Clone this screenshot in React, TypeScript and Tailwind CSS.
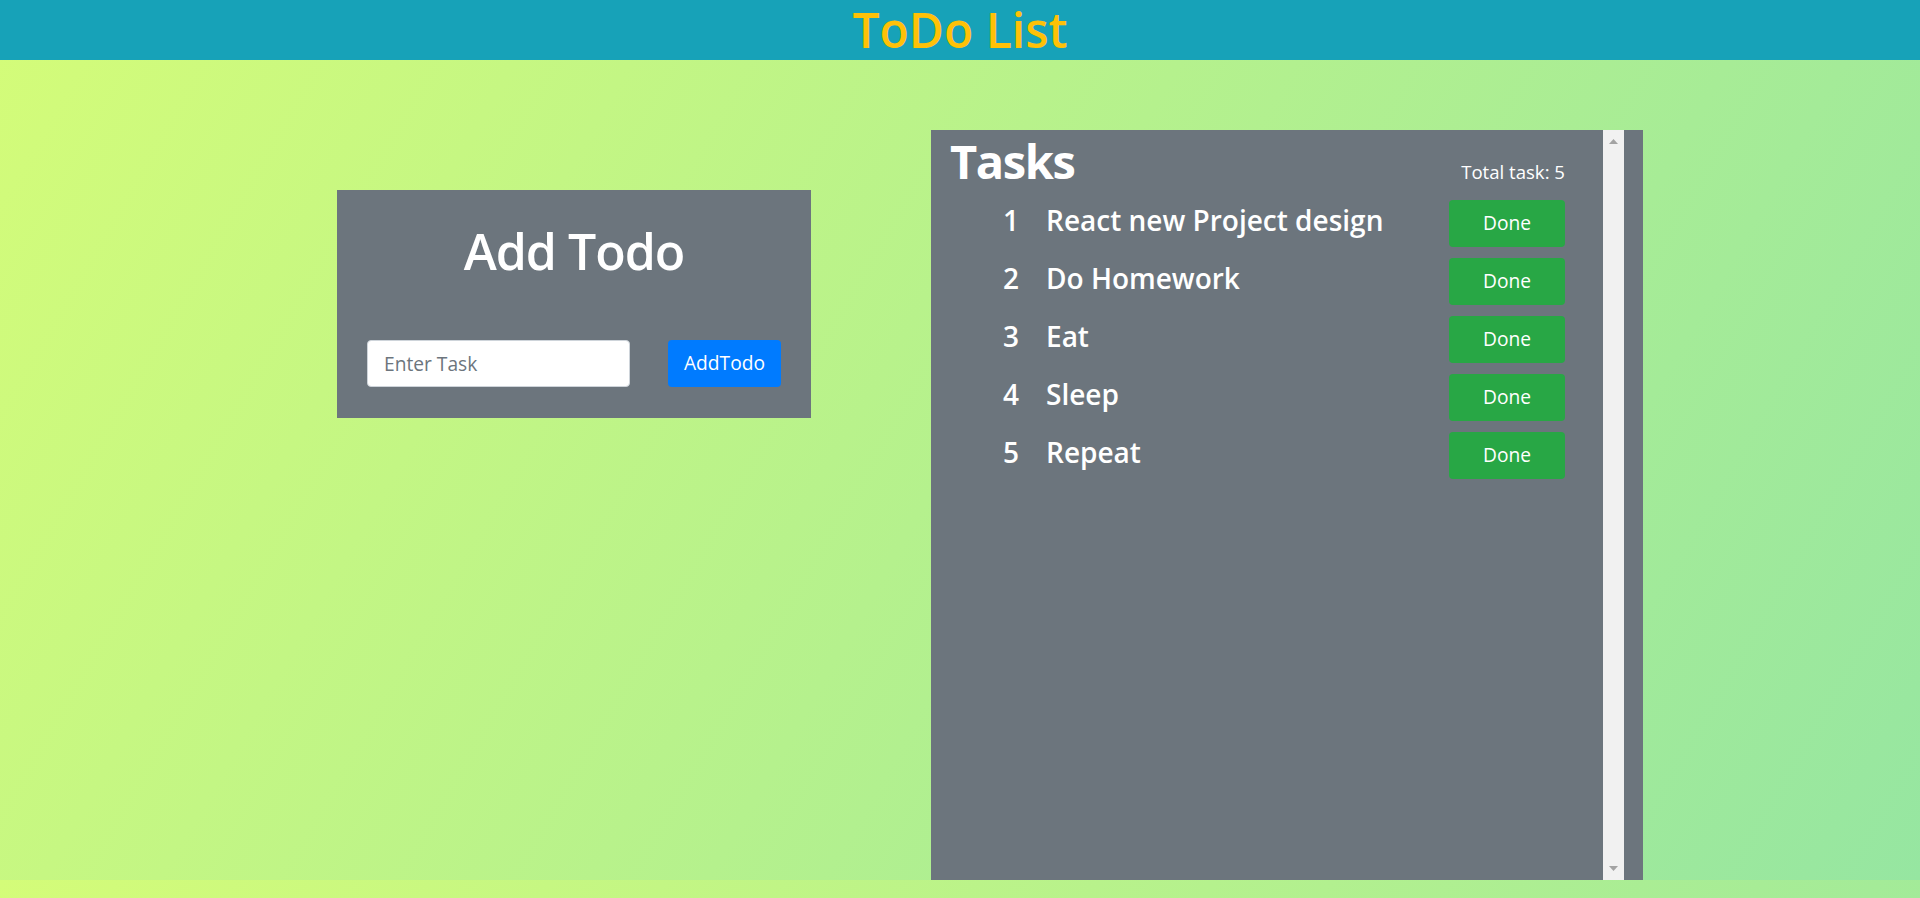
import React, { useState } from 'react'

interface Task {
  sno: number
  title: string
}

const initialTasks: Task[] = [
  { sno: 1, title: 'React new Project design' },
  { sno: 2, title: 'Do Homework' },
  { sno: 3, title: 'Eat' },
  { sno: 4, title: 'Sleep' },
  { sno: 5, title: 'Repeat' },
]

const AddTodo = ({ onAdd }: { onAdd: (title: string) => void }) => {
  const [title, setTitle] = useState<string>('')

  const handleSubmit = (e: React.FormEvent) => {
    e.preventDefault()
    if (!title.trim()) return
    onAdd(title)
    setTitle('')
  }

  return (
    <form
      onSubmit={handleSubmit}
      className="mt-[130px] w-[474px] h-[228px] bg-[#6c757d] px-[30px] pt-[36px] flex flex-col"
    >
      <h1 className="text-[50px] leading-none font-semibold tracking-[-0.02em] text-white text-center">Add Todo</h1>
      <div className="mt-[64px] flex items-center justify-between">
        <input
          type="text"
          value={title}
          onChange={(e) => setTitle(e.target.value)}
          placeholder="Enter Task"
          className="w-[263px] h-[47px] rounded-[4px] border border-[#ced4da] bg-white pl-[16px] text-[19.2px] text-[#495057] placeholder:text-[#6c757d] outline-none"
        />
        <button
          type="submit"
          className="w-[113px] h-[47px] rounded-[4px] bg-[#007bff] text-white text-[19.2px]"
        >
          AddTodo
        </button>
      </div>
    </form>
  )
}

const Tasks = ({ tasks, onDone }: { tasks: Task[]; onDone: (sno: number) => void }) => {
  return (
    <div className="ml-[120px] mt-[70px] w-[712px] h-[750px] bg-[#6c757d] flex pr-[19px]">
      <div className="flex-1 flex flex-col">
        <div className="pl-[19px] pr-[38px] pt-[8px] flex items-baseline justify-between text-white">
          <h2 className="text-[47px] leading-none font-bold tracking-[-0.03em]">Tasks</h2>
          <span className="text-[18.6px] leading-none">Total task: {tasks.length}</span>
        </div>
        <div className="mt-[15px] pl-[72px] pr-[38px] flex flex-col gap-[11px]">
          {tasks.map((task) => (
            <div key={task.sno} className="h-[47px] flex items-center justify-between">
              <h4 className="-mt-2 text-[28px] leading-none font-semibold text-white flex">
                <span className="w-[43px]">{task.sno}</span>
                <span>{task.title}</span>
              </h4>
              <button
                type="button"
                onClick={() => onDone(task.sno)}
                className="w-[116px] h-[47px] rounded-[4px] bg-[#28a745] text-white text-[19.2px]"
              >
                Done
              </button>
            </div>
          ))}
        </div>
      </div>
      <div className="w-[21px] bg-[#f1f1f1] flex flex-col items-center justify-between py-[9px]">
        <svg width="9" height="5" viewBox="0 0 9 5">
          <polygon points="4.5,0 9,5 0,5" fill="#a3a3a3" />
        </svg>
        <svg width="9" height="5" viewBox="0 0 9 5">
          <polygon points="0,0 9,0 4.5,5" fill="#a3a3a3" />
        </svg>
      </div>
    </div>
  )
}

const App = () => {
  const [tasks, setTasks] = useState<Task[]>(initialTasks)

  const addTask = (title: string) => {
    setTasks([...tasks, { sno: tasks.length + 1, title }])
  }

  const doneTask = (sno: number) => {
    setTasks(tasks.filter((t) => t.sno !== sno).map((t, i) => ({ ...t, sno: i + 1 })))
  }

  return (
    <div className="min-h-screen bg-[linear-gradient(120deg,#d4fc79_0%,#96e6a1_100%)] bg-[length:100%_880px] bg-repeat font-['Segoe_UI','Open_Sans',sans-serif]">
      <header className="h-[60px] bg-[#17a2b8] flex items-center justify-center">
        <h1 className="text-[48px] leading-none font-semibold text-[#ffc107]">ToDo List</h1>
      </header>
      <main className="h-[820px] flex items-start pl-[337px]">
        <AddTodo onAdd={addTask} />
        <Tasks tasks={tasks} onDone={doneTask} />
      </main>
    </div>
  )
}

export default App
